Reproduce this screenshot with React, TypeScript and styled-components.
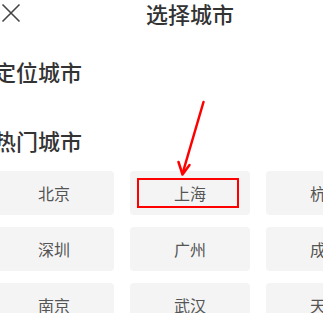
import React from "react";
import styled, { createGlobalStyle } from "styled-components";

const Global = createGlobalStyle`
  html, body { margin: 0; padding: 0; background: #fff; }
  body { font-family: "Noto Sans CJK SC", "Noto Sans", sans-serif; }
`;

const Viewport = styled.div`
  position: relative;
  width: 323px;
  height: 313px;
  overflow: hidden;
  background: #fff;
`;

const Page = styled.div`
  position: relative;
  width: 424px;
  margin-left: -22px;
  padding: 0 16px;
  box-sizing: border-box;
`;

const Header = styled.header`
  display: grid;
  grid-template-columns: 1fr auto 1fr;
  align-items: center;
  height: 26px;
`;

const CloseBtn = styled.button`
  justify-self: start;
  width: 20px;
  height: 20px;
  padding: 0;
  margin-left: 7px;
  border: 0;
  background: none;
  display: flex;
  align-items: center;
  justify-content: center;
`;

const Title = styled.h1`
  margin: 0;
  font-size: 22px;
  line-height: 26px;
  font-weight: 500;
  color: #333;
`;

const SectionTitle = styled.h2<{ $top: number }>`
  margin: ${(p) => p.$top}px 0 0;
  font-size: 22px;
  line-height: 30px;
  font-weight: 500;
  color: #333;
`;

const Grid = styled.div`
  display: grid;
  grid-template-columns: repeat(3, 120px);
  column-gap: 16px;
  row-gap: 12px;
  margin-top: 16px;
`;

const Tile = styled.div`
  position: relative;
  height: 44px;
  border-radius: 4px;
  background: #f4f4f4;
  display: flex;
  align-items: center;
  justify-content: center;
  font-size: 16px;
  color: #555;
`;

const Marker = styled.div`
  position: absolute;
  left: 7px;
  top: 7px;
  width: 102px;
  height: 30px;
  box-sizing: border-box;
  border: 2.5px solid #ff0000;
`;

const Arrow = styled.svg`
  position: absolute;
  left: 0;
  top: 0;
  pointer-events: none;
`;

const cities = ["北京", "上海", "杭州", "深圳", "广州", "成都", "南京", "武汉", "天津"];

export default function App() {
  return (
    <>
      <Global />
      <Viewport>
        <Page>
          <Header>
            <CloseBtn aria-label="关闭">
              <svg width="20" height="20" viewBox="0 0 20 20">
                <path d="M1.5 1.5 L18.5 18.5 M18.5 1.5 L1.5 18.5" stroke="#444" strokeWidth="1.6" fill="none" />
              </svg>
            </CloseBtn>
            <Title>选择城市</Title>
            <span />
          </Header>
          <SectionTitle $top={30}>定位城市</SectionTitle>
          <SectionTitle $top={39}>热门城市</SectionTitle>
          <Grid>
            {cities.map((c) => (
              <Tile key={c}>
                {c === "上海" && <Marker />}
                {c}
              </Tile>
            ))}
          </Grid>
        </Page>
        <Arrow width="323" height="313" viewBox="0 0 323 313">
          <path d="M203.5 102 L183 172" stroke="#ff0000" strokeWidth="2.5" fill="none" strokeLinecap="round" />
          <path d="M178.5 162 L182.5 174.5 L189.5 165" stroke="#ff0000" strokeWidth="2.5" fill="none" strokeLinecap="round" strokeLinejoin="round" />
        </Arrow>
      </Viewport>
    </>
  );
}
